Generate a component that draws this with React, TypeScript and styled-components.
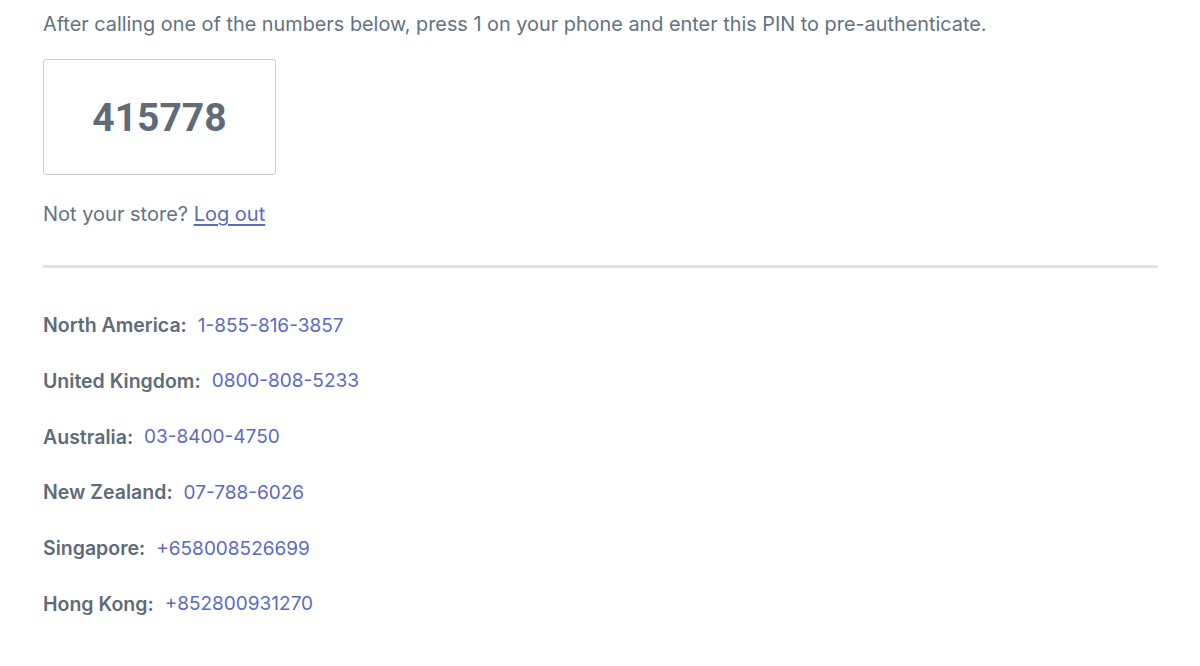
import React from "react";
import styled, { createGlobalStyle } from "styled-components";

const GlobalStyle = createGlobalStyle`
  body {
    margin: 0;
    background: #fff;
    font-family: Inter, "Noto Sans", sans-serif;
    color: #637381;
  }
`;

interface PhoneNumber {
  region: string;
  number: string;
}

const numbers: PhoneNumber[] = [
  { region: "North America", number: "1-855-816-3857" },
  { region: "United Kingdom", number: "0800-808-5233" },
  { region: "Australia", number: "03-8400-4750" },
  { region: "New Zealand", number: "07-788-6026" },
  { region: "Singapore", number: "+658008526699" },
  { region: "Hong Kong", number: "+852800931270" },
];

const App: React.FunctionComponent = () => {
  return (
    <>
      <GlobalStyle />
      <Page>
        <Intro>
          After calling one of the numbers below, press 1 on your phone and
          enter this PIN to pre-authenticate.
        </Intro>
        <PinBox>415778</PinBox>
        <StoreLine>
          Not your store? <Link href="#">Log out</Link>
        </StoreLine>
        <Divider />
        <NumberList>
          {numbers.map((item) => (
            <NumberRow key={item.region}>
              <Region>{item.region}:</Region>
              <Phone href="#">{item.number}</Phone>
            </NumberRow>
          ))}
        </NumberList>
      </Page>
    </>
  );
};

const Page = styled.div`
  padding: 10px 42px 0 43px;
  display: flex;
  flex-direction: column;
`;

const Intro = styled.p`
  margin: 0;
  font-size: 19.85px;
  line-height: 28px;
`;

const PinBox = styled.div`
  margin-top: 21px;
  width: 231px;
  height: 112px;
  padding-top: 2px;
  border: 1px solid #c4cdd5;
  border-radius: 3px;
  display: flex;
  align-items: center;
  justify-content: center;
  font-family: Roboto, Inter, sans-serif;
  font-weight: 700;
  font-size: 39px;
  line-height: 1;
  color: #5f6b78;
`;

const StoreLine = styled.p`
  margin: 25px 0 0;
  font-size: 20px;
  line-height: 28px;
`;

const Link = styled.a`
  color: #5c6ac4;
  text-decoration: underline;
  text-underline-offset: 3px;
`;

const Divider = styled.hr`
  margin: 37px 0 0;
  border: none;
  height: 3px;
  background: #dfe3e8;
`;

const NumberList = styled.div`
  margin-top: 43px;
  display: flex;
  flex-direction: column;
  gap: 27.8px;
`;

const NumberRow = styled.div`
  display: flex;
  align-items: center;
  gap: 11px;
  font-size: 19.5px;
  height: 28px;
`;

const Region = styled.span`
  font-weight: 600;
  color: #5f6b78;
`;

const Phone = styled.a`
  color: #5c6ac4;
  font-size: 19px;
  text-decoration: none;
`;

export default App;
